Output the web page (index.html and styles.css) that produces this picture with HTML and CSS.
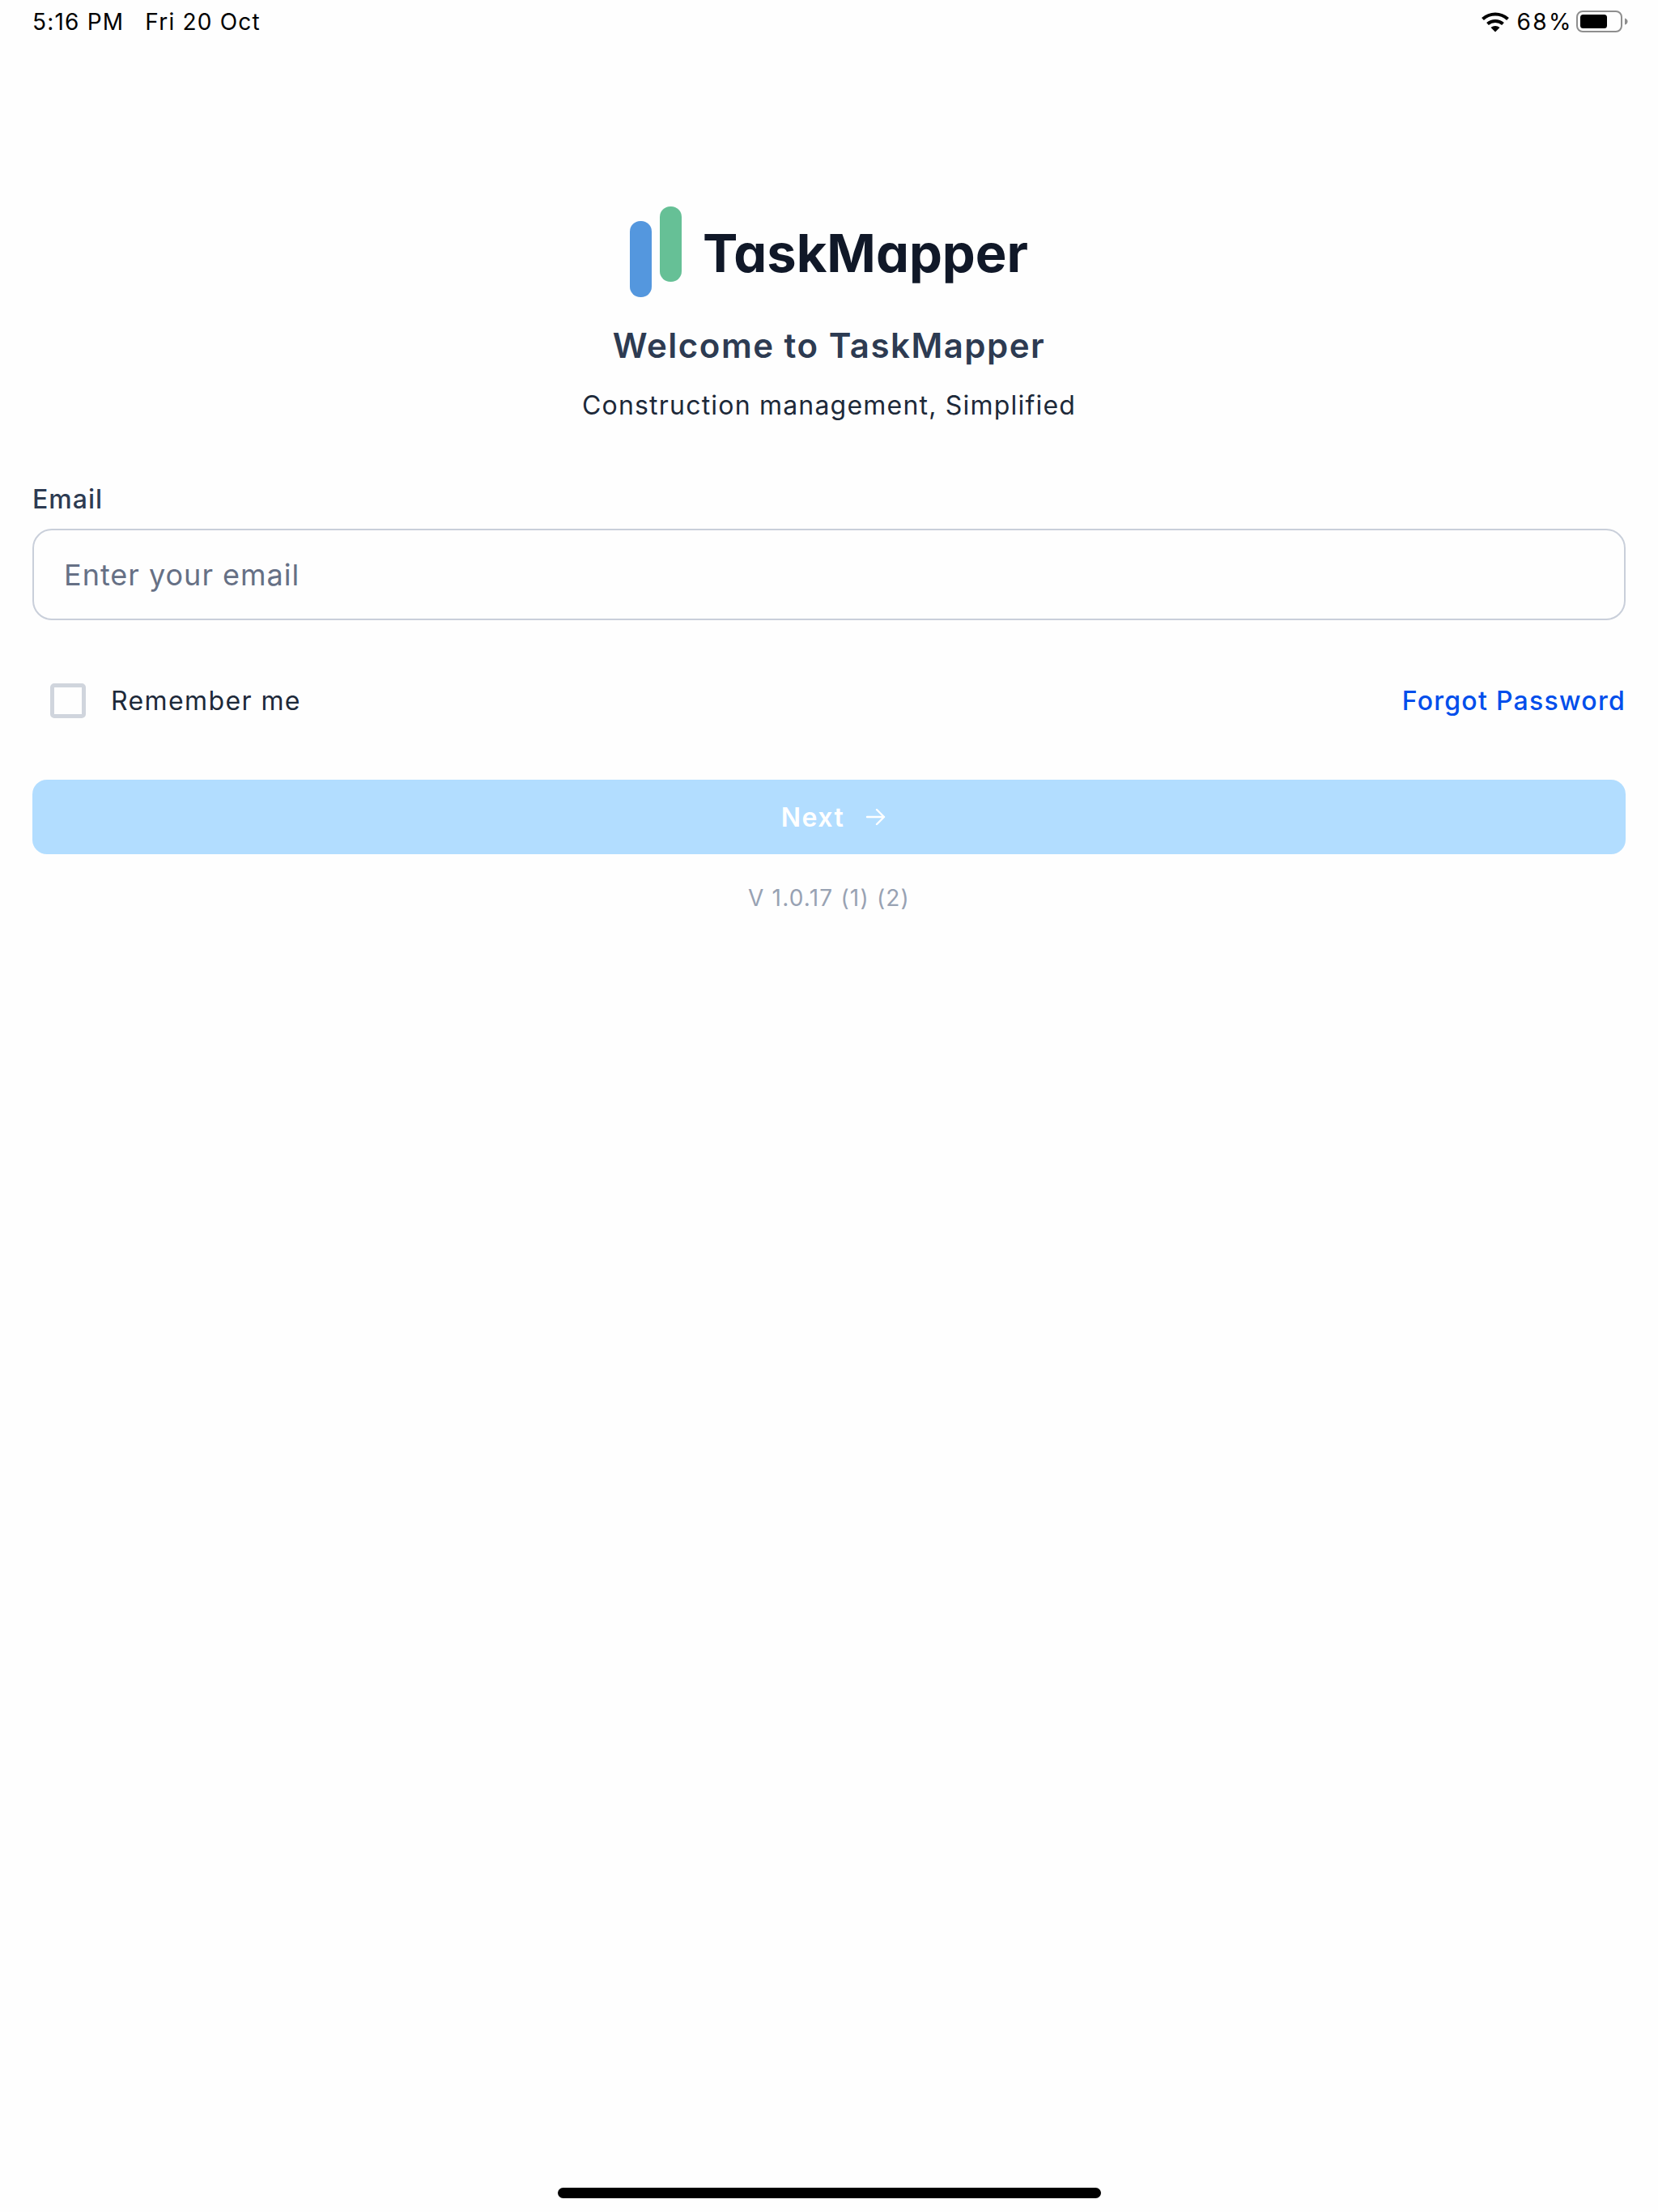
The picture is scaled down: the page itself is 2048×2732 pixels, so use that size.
FILE: index.html
```html
<!DOCTYPE html>
<html>
<head>
  <title>TaskMapper</title>
  <link rel="stylesheet" href="styles.css">
</head>
<body>
  <div class="page">
    <div class="status-bar">
      <div class="status-left">
        <span>5:16 PM</span>
        <span>Fri 20 Oct</span>
      </div>
      <div class="status-right">
        <svg class="wifi" width="36" height="26" viewBox="0 0 36 26">
          <path d="M2.5 9.5C11.5 1.5 24.5 1.5 33.5 9.5" fill="none" stroke="#000" stroke-width="4.2"/>
          <path d="M8.5 15.5C14 10.8 22 10.8 27.5 15.5" fill="none" stroke="#000" stroke-width="4.2"/>
          <path d="M12.5 20L18 25.5L23.5 20C20.5 17.3 15.5 17.3 12.5 20Z" fill="#000"/>
        </svg>
        <span class="battery-text">68%</span>
        <svg class="battery" width="65" height="28" viewBox="0 0 65 28">
          <rect x="1" y="1" width="55" height="25" rx="7" fill="none" stroke="#8e8e8e" stroke-width="2"/>
          <rect x="5" y="5" width="33" height="17" rx="3.5" fill="#000"/>
          <path d="M60 9.5C62.500 10 63.500 12 63.500 13.500C63.500 15 62.500 17 60 17.500Z" fill="#8e8e8e"/>
        </svg>
      </div>
    </div>

    <div class="brand">
      <div class="logo">
        <svg width="64" height="113" viewBox="0 0 64 113">
          <rect x="0" y="18" width="27" height="94" rx="13" fill="#5497de"/>
          <rect x="37" y="0" width="27" height="93" rx="13" fill="#66c096"/>
        </svg>
        <span class="logo-name">TaskMapper</span>
      </div>
      <h1>Welcome to TaskMapper</h1>
      <p class="tagline">Construction management, Simplified</p>
    </div>

    <form class="login-form">
      <label class="field-label" for="email">Email</label>
      <input id="email" class="email-input" type="text" placeholder="Enter your email">

      <div class="options-row">
        <label class="remember">
          <input class="checkbox" type="checkbox">
          <span>Remember me</span>
        </label>
        <a class="forgot-link" href="#">Forgot Password</a>
      </div>

      <button class="next-button" type="button" disabled>
        <span>Next</span>
        <svg width="26" height="26" viewBox="0 0 26 26">
          <path d="M2 13H23M14 4L23 13L14 22" fill="none" stroke="#fff" stroke-width="2.4" stroke-linecap="round" stroke-linejoin="round"/>
        </svg>
      </button>
    </form>

    <p class="version">V 1.0.17 (1) (2)</p>

    <div class="home-indicator"></div>
  </div>
</body>
</html>
```

FILE: styles.css
```css
* {
  box-sizing: border-box;
}

body {
  margin: 0;
  font-family: Inter, "Liberation Sans", sans-serif;
  background-color: #fefefe;
}

.page {
  height: 2732px;
  display: flex;
  flex-direction: column;
  padding: 0 40px;
}

.status-bar {
  display: flex;
  justify-content: space-between;
  align-items: center;
  height: 54px;
  font-size: 28px;
  letter-spacing: 1.2px;
  color: #000;
}

.status-left {
  display: flex;
  gap: 26px;
}

.status-right {
  display: flex;
  align-items: center;
  gap: 9px;
  margin-right: -4px;
}

.battery-text {
  letter-spacing: 2.4px;
}

.battery {
  margin-left: -5px;
}

.brand {
  display: flex;
  flex-direction: column;
  align-items: center;
  margin-top: 201px;
}

.logo {
  display: flex;
  align-items: center;
  gap: 26px;
  height: 113px;
}

.logo-name {
  font-size: 65px;
  font-weight: 700;
  font-feature-settings: "cv11";
  color: #101828;
  margin-top: 2px;
}

h1 {
  margin: 35px 0 0;
  font-size: 42px;
  line-height: 48px;
  font-weight: 600;
  letter-spacing: 1.5px;
  color: #2d3b52;
}

.tagline {
  margin: 30px 0 0;
  font-size: 32px;
  line-height: 40px;
  letter-spacing: 1.2px;
  color: #1d2939;
}

.login-form {
  display: flex;
  flex-direction: column;
  margin-top: 76px;
}

.field-label {
  font-size: 32px;
  line-height: 40px;
  font-weight: 500;
  letter-spacing: 1px;
  color: #2d3b52;
}

.email-input {
  height: 113px;
  margin-top: 16px;
  padding: 0 37px;
  font-family: inherit;
  font-size: 36px;
  letter-spacing: 1px;
  background-color: #fefefe;
  border: 2px solid #c9cfda;
  border-radius: 24px;
}

.email-input::placeholder {
  color: #667085;
  opacity: 1;
}

.options-row {
  display: flex;
  justify-content: space-between;
  align-items: center;
  margin-top: 77px;
  height: 44px;
}

.remember {
  display: flex;
  align-items: center;
  gap: 31px;
  padding-left: 22px;
  font-size: 32px;
  letter-spacing: 1.4px;
  color: #1d2939;
}

.checkbox {
  appearance: none;
  width: 44px;
  height: 43px;
  margin: 0;
  background-color: #fefefe;
  border: 5px solid #d0d5dd;
  border-radius: 5px;
}

.forgot-link {
  font-size: 32px;
  font-weight: 500;
  letter-spacing: 1.27px;
  color: #004eeb;
  text-decoration: none;
}

.next-button {
  display: flex;
  justify-content: center;
  align-items: center;
  gap: 26px;
  height: 92px;
  margin-top: 76px;
  padding: 0 0 0 12px;
  font-family: inherit;
  font-size: 32px;
  font-weight: 600;
  letter-spacing: 1.5px;
  color: #fff;
  background-color: #b2ddff;
  border: none;
  border-radius: 18px;
}

.version {
  margin: 37px 0 0;
  text-align: center;
  font-size: 28px;
  line-height: 34px;
  letter-spacing: 1.2px;
  color: #98a2b3;
}

.home-indicator {
  width: 671px;
  height: 13px;
  margin: auto auto 17px;
  background-color: #000;
  border-radius: 7px;
}
```
